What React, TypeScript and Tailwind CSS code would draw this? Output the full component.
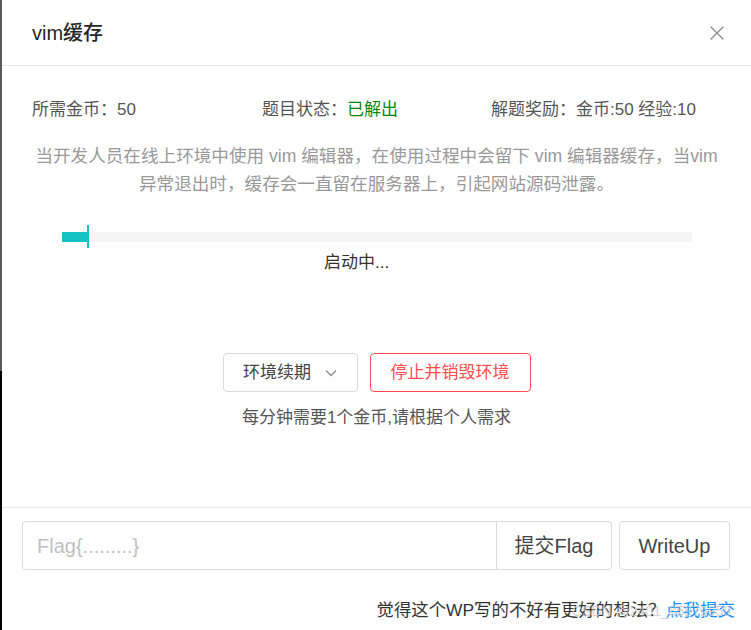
import React from 'react';

const FONT = '"Liberation Sans", "Noto Sans CJK SC", sans-serif';

function CloseIcon() {
  return (
    <svg width="16" height="16" viewBox="0 0 16 16" fill="none" stroke="#8c8c8c" strokeWidth="1.4" strokeLinecap="round">
      <path d="M2 2L14 14M14 2L2 14" />
    </svg>
  );
}

function ChevronDown() {
  return (
    <svg width="12" height="8" viewBox="0 0 12 8" fill="none" stroke="#8c8c8c" strokeWidth="1.3">
      <path d="M1 1.5L6 6.5L11 1.5" />
    </svg>
  );
}

export default function App() {
  const progress = 26;

  return (
    <div className="relative flex h-[630px] w-[751px] overflow-hidden bg-white text-[17px] text-[#333]" style={{ fontFamily: FONT }}>
      {/* 背景の縁 */}
      <div className="flex w-[2px] flex-col">
        <div className="h-[371px] bg-[#5a5a5a]" />
        <div className="flex-1 bg-black" />
      </div>

      <div className="flex flex-1 flex-col">
        {/* ヘッダー */}
        <div className="flex h-[66px] items-center justify-between border-b border-[#e8e8e8] pl-[30px] pr-[26px]">
          <span className="text-[20px] font-medium text-[#262626]">vim缓存</span>
          <CloseIcon />
        </div>

        {/* 本体 */}
        <div className="flex h-[442px] flex-col border-b border-[#e8e8e8]">
          <div className="flex pl-[30px] pt-[32px] leading-6 text-[#555]">
            <div className="w-[230px]">所需金币：50</div>
            <div className="w-[229px]">
              题目状态：<span className="text-[#078507]">已解出</span>
            </div>
            <div>解题奖励：金币:50 经验:10</div>
          </div>

          <p className="mt-[20px] text-center text-[17.6px] leading-[28px] text-[#999]">
            当开发人员在线上环境中使用 vim 编辑器，在使用过程中会留下 vim 编辑器缓存，当vim
            <br />
            异常退出时，缓存会一直留在服务器上，引起网站源码泄露。
          </p>

          <div className="relative mx-auto mt-[34px] h-[10px] w-[630px] bg-[#f5f5f5]">
            <div className="h-full bg-[#13c2c2]" style={{ width: progress }} />
            <div className="absolute top-[-7px] h-[23px] w-[2px] bg-[#13c2c2]" style={{ left: progress - 1 }} />
          </div>

          <div className="mt-[9px] pl-[322px] leading-6">启动中...</div>

          <div className="mt-[78px] flex justify-center gap-[12px]">
            <button className="flex h-[39px] w-[135px] items-center justify-center gap-[14px] rounded-[4px] border border-[#d9d9d9] text-[#444]">
              环境续期
              <ChevronDown />
            </button>
            <button className="h-[39px] w-[161px] rounded-[4px] border border-[#ff4d4f] text-[#ff4d4f]">
              停止并销毁环境
            </button>
          </div>

          <div className="mt-[14px] text-center leading-6 text-[#555]">每分钟需要1个金币,请根据个人需求</div>
        </div>

        {/* フッター */}
        <div className="flex flex-col pl-[20px] pr-[21px] pt-[13px]">
          <div className="flex h-[49px] gap-[7px]">
            <div className="flex flex-1 rounded-[4px] border border-[#d9d9d9]">
              <div className="flex flex-1 items-center pl-[14px] text-[20px] text-[#bfbfbf]">Flag{'{'}.........{'}'}</div>
              <button className="w-[115px] border-l border-[#d9d9d9] text-[20px] text-[#444]">提交Flag</button>
            </div>
            <button className="w-[111px] rounded-[4px] border border-[#d9d9d9] text-[20px] text-[#444]">WriteUp</button>
          </div>

          <div className="mr-[-5px] mt-[28px] text-right text-[17.4px] leading-6 text-[#333]">
            觉得这个WP写的不好有更好的想法？<span className="text-[#1890ff]">点我提交</span>
          </div>
        </div>
      </div>

      {/* 透かし */}
      <div className="absolute bottom-[8px] right-[20px] text-[14px] text-[#c8c8c8] opacity-80">CSDN @2401_85979959</div>
    </div>
  );
}
